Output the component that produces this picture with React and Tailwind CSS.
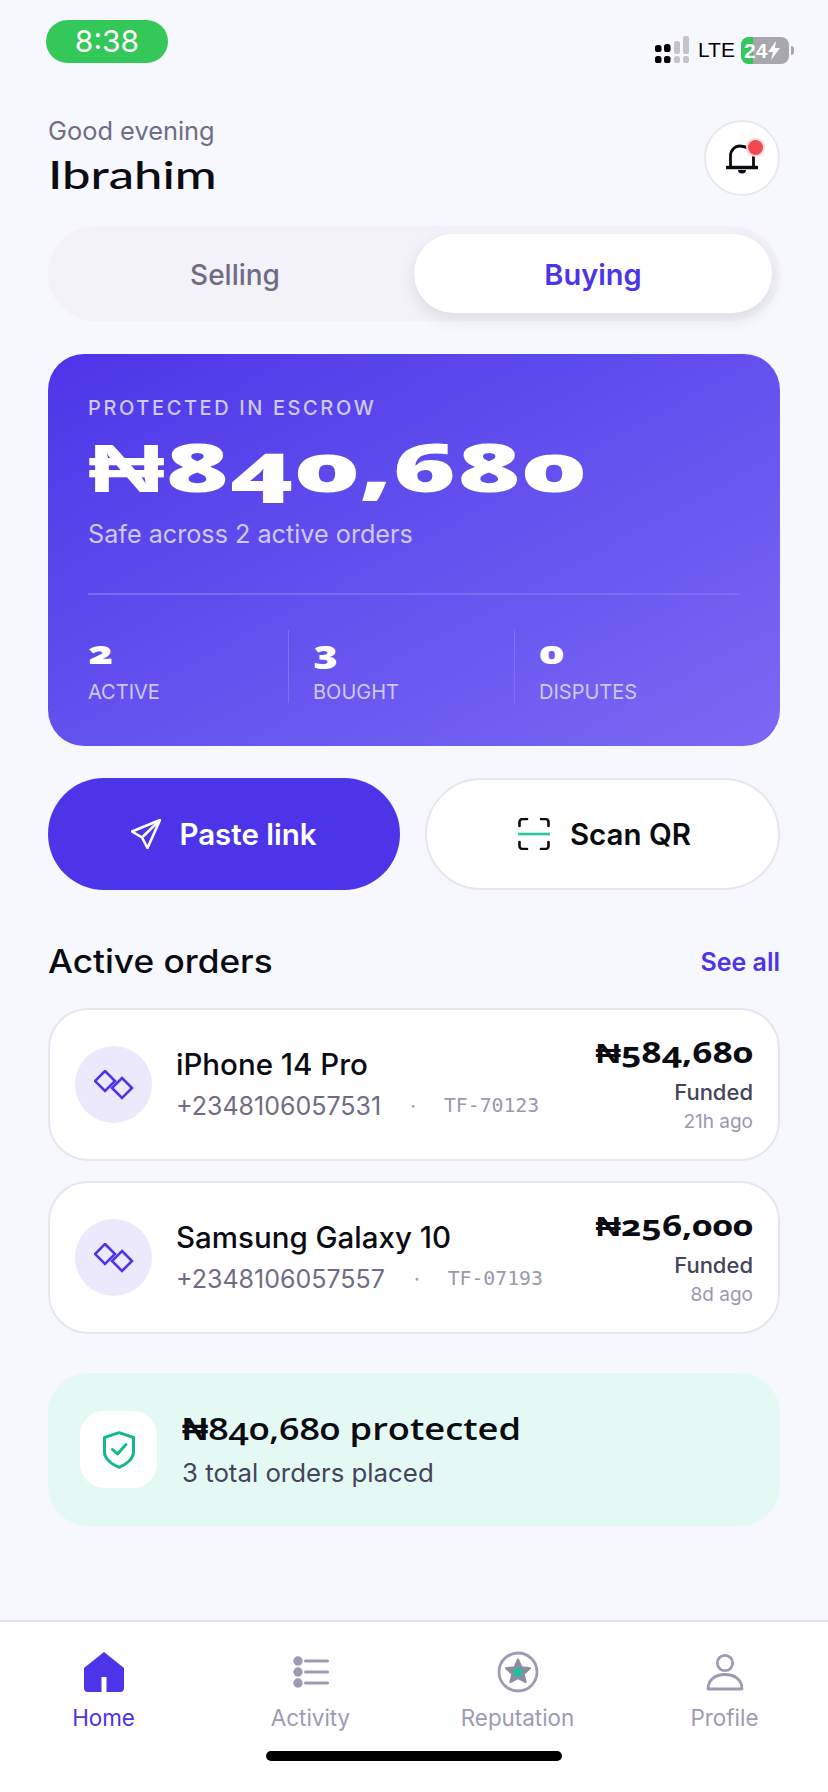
import React from "react";

const display = "font-['Open_Sans',sans-serif] oldstyle-nums";

function StatusBar() {
  return (
    <div className="h-[82px] flex justify-between pl-[46px] pr-[34px] pt-5">
      <div className="w-[122px] h-[43px] rounded-full bg-[#34c759] text-white text-[30px] flex items-center justify-center font-['Inter',sans-serif]">
        8:38
      </div>
      <div className="flex items-end gap-[5px] h-[44px]">
        <svg width="38" height="28" viewBox="0 0 38 28">
          <rect x="0" y="9" width="6.5" height="7" rx="2.6" fill="#000" />
          <rect x="9" y="8" width="6.5" height="8" rx="2.6" fill="#000" />
          <rect x="0" y="20" width="6.5" height="7" rx="2.6" fill="#000" />
          <rect x="9" y="20" width="6.5" height="7" rx="2.6" fill="#000" />
          <rect x="19" y="5" width="6" height="13" rx="2" fill="#c3c3c9" />
          <rect x="28" y="0" width="6" height="18" rx="2" fill="#c3c3c9" />
          <rect x="19" y="20" width="6" height="7" rx="2.6" fill="#c3c3c9" />
          <rect x="28" y="20" width="6" height="7" rx="2.6" fill="#c3c3c9" />
        </svg>
        <span className="text-[21px] leading-[28px] font-['Liberation_Sans',sans-serif] text-black w-[36px] mr-[2px]">LTE</span>
        <div className="relative w-[48px] h-[27px] rounded-[8px] bg-[#a7a7ad] overflow-hidden flex items-center pl-[3px]">
          <div className="absolute left-0 top-0 bottom-0 w-[12px] bg-[#34c759]" />
          <span className="relative text-white text-[21px] leading-none font-bold font-['Liberation_Sans',sans-serif]">24</span>
          <svg width="12" height="19" viewBox="0 0 12 19" className="relative ml-[1px]">
            <path d="M8 0 L0 11 H5 L3 19 L12 7 H7 Z" fill="#fff" />
          </svg>
        </div>
        <div className="w-[3px] h-[9px] rounded-r-full bg-[#a7a7ad] mb-[9px] -ml-[3px]" />
      </div>
    </div>
  );
}

function Header() {
  return (
    <div className="flex justify-between items-start pl-12 pr-12 mt-[38px]">
      <div>
        <div className="text-[25.4px] leading-[28px] text-[#6e6d85] -mt-[3px]">Good evening</div>
        <div className="w-fit text-[39px] leading-[44px] font-medium text-[#0b0b12] mt-[7px] font-['Lato',sans-serif] scale-x-[1.3] origin-left">Ibrahim</div>
      </div>
      <div className="relative w-[76px] h-[76px] rounded-full bg-white border-2 border-[#e8e8ef] flex items-center justify-center">
        <svg width="32" height="30" viewBox="0 0 32 30" className="mt-[2px]">
          <path d="M4.5 23 V12 C4.5 6 9 2 14 2 C20 2 27 6 27.5 12 V23" fill="none" stroke="#0b0b12" strokeWidth="2.8" />
          <path d="M1 23.5 H31" stroke="#0b0b12" strokeWidth="3.4" strokeLinecap="round" />
          <path d="M12 26 a4 3.4 0 0 0 8 0" fill="#0b0b12" />
        </svg>
        <div className="absolute top-[18px] left-[42px] w-[15px] h-[15px] rounded-full bg-[#f2484f] ring-2 ring-[#fdd9dc]" />
      </div>
    </div>
  );
}

function Toggle() {
  return (
    <div className="mx-12 mt-[30px] h-[95px] rounded-full bg-[#f2f2f8] p-2 flex items-stretch">
      <div className="w-[358px] flex items-center justify-center text-[28px] text-[#6e6d85] font-medium pt-[2px]">Selling</div>
      <div className="w-[358px] rounded-full bg-white shadow-[0_6px_16px_rgba(30,30,60,0.10)] flex items-center justify-center text-[29px] text-[#4c35e8] font-semibold pt-[2px]">Buying</div>
    </div>
  );
}

function Stat({ value, label, className }) {
  return (
    <div className={className}>
      <div className={`w-fit text-[32px] leading-[30px] font-extrabold text-white mt-[7px] scale-x-[1.3] origin-left ${display}`}>{value}</div>
      <div className="text-[20px] leading-[24px] text-[#cfc8fb] mt-[13px]">{label}</div>
    </div>
  );
}

function EscrowCard() {
  return (
    <div className="mx-12 mt-[33px] h-[392px] rounded-[36px] bg-linear-to-br from-[#4c35e8] to-[#7b68f3] px-10 pt-[41px]">
      <div className="text-[20px] leading-[26px] tracking-[2.6px] font-medium text-[#cfc8fb]">PROTECTED IN ESCROW</div>
      <div className={`w-fit text-[68px] leading-[80px] font-extrabold text-white mt-[5px] whitespace-nowrap scale-x-[1.57] origin-left ${display}`}>₦840,680</div>
      <div className="text-[25.2px] leading-[30px] text-[#cfc8fb] mt-[13px]">Safe across 2 active orders</div>
      <div className="h-[2px] bg-[#7a6cf5] mt-[44px]" />
      <div className="flex mt-[35px]">
        <Stat value="2" label="ACTIVE" className="w-[201px] h-[73px] border-r border-[#7f71f3]" />
        <Stat value="3" label="BOUGHT" className="w-[226px] h-[73px] pl-[24px] border-r border-[#7f71f3]" />
        <Stat value="0" label="DISPUTES" className="flex-1 h-[73px] pl-[24px]" />
      </div>
    </div>
  );
}

function Actions() {
  return (
    <div className="mx-12 mt-8 flex gap-[25px] text-[29.5px] font-semibold">
      <div className="w-[352px] h-[112px] rounded-full bg-[#4c35e8] text-white flex items-center justify-center gap-[18px]">
        <svg width="30" height="30" viewBox="0 0 30 30" fill="none" stroke="#fff" strokeWidth="2.6" strokeLinejoin="round">
          <path d="M29 1 L1 12.5 L11 18.5 L16.5 29 Z" />
          <path d="M29 1 L11 18.5" />
        </svg>
        <span>Paste link</span>
      </div>
      <div className="w-[355px] h-[112px] rounded-full bg-white border-2 border-[#e6e6ee] text-[#0b0b12] flex items-center justify-center gap-[20px] pl-[4px]">
        <svg width="32" height="32" viewBox="0 0 32 32" fill="none" stroke="#0b0b12" strokeWidth="2.6" strokeLinecap="round">
          <path d="M1.5 8 V4 a3 3 0 0 1 3 -3 H9 M23 1 H27.5 a3 3 0 0 1 3 3 V8 M1.5 24 V28 a3 3 0 0 0 3 3 H9 M23 31 H27.5 a3 3 0 0 0 3 -3 V24" />
          <path d="M0 16 H32" stroke="#2ac79c" strokeLinecap="butt" />
        </svg>
        <span>Scan QR</span>
      </div>
    </div>
  );
}

function Diamonds() {
  return (
    <svg width="40" height="30" viewBox="0 0 40 30" fill="none" stroke="#4c35e8" strokeWidth="2.6">
      <path d="M11 1 L21 11 L11 21 L1 11 Z" />
      <path d="M28 8 L38 18 L28 28 L18 18 Z" />
    </svg>
  );
}

function OrderCard({ name, phone, code, amount, age, status }) {
  return (
    <div className="h-[153px] rounded-[40px] bg-white border-2 border-[#e6e6ee] flex items-center pl-[25px] pr-[25px]">
      <div className="w-[77px] h-[77px] rounded-full bg-[#ece9fd] flex items-center justify-center shrink-0">
        <Diamonds />
      </div>
      <div className="ml-6">
        <div className="text-[29.5px] leading-[34px] font-medium text-[#0b0b12] -mt-[2px]">{name}</div>
        <div className="flex items-center text-[25px] leading-[30px] text-[#6e6d85] mt-[10px] whitespace-nowrap">
          <span>{phone}</span>
          <span className="text-[#9a99ad] text-[20px] ml-[29px]">·</span>
          <span className="font-['DejaVu_Sans_Mono',monospace] text-[19.8px] text-[#9a99ad] ml-[28px]">{code}</span>
        </div>
      </div>
      <div className="ml-auto flex flex-col items-end text-right">
        <div className={`w-fit text-[28px] leading-[34px] font-bold text-[#0b0b12] whitespace-nowrap scale-x-[1.26] origin-right ${display}`}>{amount}</div>
        <div className="text-[22px] leading-[26px] font-medium text-[#44445a] mt-[10px]">{status}</div>
        <div className="text-[19px] leading-[24px] text-[#9a99ad] mt-[5px]">{age}</div>
      </div>
    </div>
  );
}

function Summary() {
  return (
    <div className="mx-12 mt-[39px] h-[153px] rounded-[40px] bg-[#e4f9f4] flex items-center pl-8">
      <div className="w-[77px] h-[77px] rounded-[24px] bg-white flex items-center justify-center shrink-0">
        <svg width="32" height="38" viewBox="0 0 32 38" fill="none" stroke="#14b88e" strokeWidth="3" strokeLinejoin="round" strokeLinecap="round">
          <path d="M16 1.7 L30.5 6.5 V21 C30.5 28 23 33.5 16 36.3 C9 33.5 1.5 28 1.5 21 V6.5 Z" />
          <path d="M9.5 18.5 L14.5 23 L23 13.5" />
        </svg>
      </div>
      <div className="ml-[25px]">
        <div className={`w-fit text-[31px] leading-[38px] font-semibold text-[#0b0b12] whitespace-nowrap -mt-[3px] scale-x-[1.17] origin-left ${display}`}>₦840,680 protected</div>
        <div className="text-[25.8px] leading-[30px] text-[#44445a] mt-[11px]">3 total orders placed</div>
      </div>
    </div>
  );
}

function NavItem({ label, active, children }) {
  return (
    <div className={active ? "flex flex-col items-center text-[#4c35e8]" : "flex flex-col items-center text-[#9c9bb3]"}>
      <div className="h-[42px] flex items-center justify-center">{children}</div>
      <div className="text-[22.4px] leading-[26px] mt-[12px]">{label}</div>
    </div>
  );
}

function BottomNav() {
  return (
    <div className="mt-auto h-[172px] bg-white border-t-2 border-[#e5e5ec]">
      <div className="grid grid-cols-4 pt-[29px]">
        <NavItem label="Home" active>
          <svg width="40" height="40" viewBox="0 0 40 40">
            <path d="M20 0 L40 16 V36 a4 4 0 0 1 -4 4 H22.5 V25 H17.5 V40 H4 a4 4 0 0 1 -4 -4 V16 Z" fill="#4c35e8" />
          </svg>
        </NavItem>
        <NavItem label="Activity">
          <svg width="36" height="32" viewBox="0 0 36 32" fill="#9c9bb3">
            <circle cx="5" cy="5" r="4.7" />
            <circle cx="5" cy="16" r="4.7" />
            <circle cx="5" cy="27" r="4.7" />
            <rect x="11" y="3.5" width="25" height="3" rx="1.5" />
            <rect x="11" y="14.5" width="25" height="3" rx="1.5" />
            <rect x="11" y="25.5" width="25" height="3" rx="1.5" />
          </svg>
        </NavItem>
        <NavItem label="Reputation">
          <svg width="42" height="42" viewBox="0 0 42 42">
            <circle cx="21" cy="21" r="19" fill="none" stroke="#9c9bb3" strokeWidth="2.8" />
            <path d="M21 8.5 L24.6 16.3 L33 17.2 L26.8 22.9 L28.6 31.2 L21 27 L13.4 31.2 L15.2 22.9 L9 17.2 L17.4 16.3 Z" fill="#8d8ca6" stroke="#8d8ca6" strokeWidth="2" strokeLinejoin="round" />
            <path d="M21 15 L23 19 L27.2 19.6 L24.1 22.4 L25 26.6 L21 24.5 L17 26.6 L17.9 22.4 L14.8 19.6 L19 19 Z" fill="#14c79a" />
          </svg>
        </NavItem>
        <NavItem label="Profile">
          <svg width="38" height="38" viewBox="0 0 38 38" fill="none" stroke="#9c9bb3" strokeWidth="2.8" strokeLinejoin="round">
            <circle cx="19" cy="10" r="7.7" />
            <path d="M2 36 C2 27 9 21.5 19 21.5 C29 21.5 36 27 36 36 Z" />
          </svg>
        </NavItem>
      </div>
      <div className="w-[296px] h-[10px] rounded-full bg-black mx-auto mt-[20px]" />
    </div>
  );
}

export default function App() {
  return (
    <div className="w-[828px] min-h-[1792px] flex flex-col bg-[#f7f7fe] font-['Inter',sans-serif]">
      <StatusBar />
      <Header />
      <Toggle />
      <EscrowCard />
      <Actions />
      <div className="mx-12 mt-[52px] flex items-center justify-between">
        <div className="w-fit text-[32px] leading-[40px] font-medium text-[#0b0b12] scale-x-[1.1] origin-left">Active orders</div>
        <div className="text-[25px] leading-[32px] font-semibold text-[#4c35e8]">See all</div>
      </div>
      <div className="mx-12 mt-[26px] flex flex-col gap-5">
        <OrderCard name="iPhone 14 Pro" phone="+2348106057531" code="TF-70123" amount="₦584,680" status="Funded" age="21h ago" />
        <OrderCard name="Samsung Galaxy 10" phone="+2348106057557" code="TF-07193" amount="₦256,000" status="Funded" age="8d ago" />
      </div>
      <Summary />
      <BottomNav />
    </div>
  );
}
